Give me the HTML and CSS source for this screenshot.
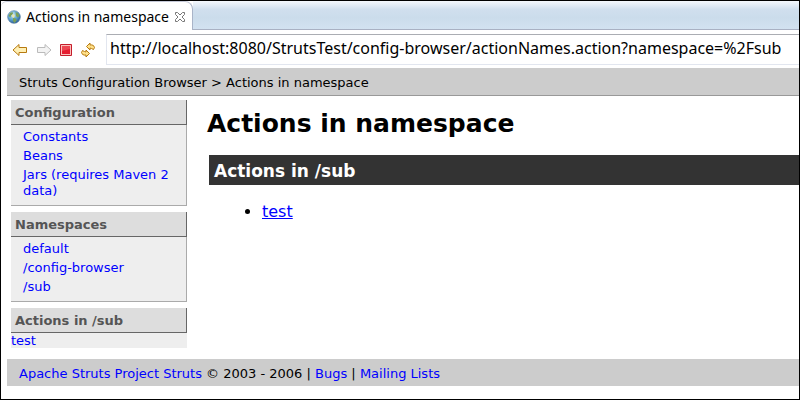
FILE: index.html
```
<!DOCTYPE html>
<html lang="en">
<head>
<meta charset="utf-8">
<title>Actions in namespace</title>
<link rel="stylesheet" href="styles.css">
</head>
<body>
<div class="window">
  <div class="tabs">
    <div class="tab">
      <svg class="globe" width="14" height="14" viewBox="0 0 14 14" aria-hidden="true">
        <defs><radialGradient id="sea" cx=".38" cy=".3" r=".8"><stop offset="0" stop-color="#cbe8f7"/><stop offset=".5" stop-color="#5fa5d2"/><stop offset="1" stop-color="#1c4a88"/></radialGradient></defs>
        <circle cx="7" cy="7" r="6.3" fill="url(#sea)" stroke="#5580a5" stroke-width=".7"/>
        <path d="M1.500 6 3 3l2.500-1 .5 2-2 1.500-.5 2zM8.500 2l2.500 1 1.500 3-2 1.500L9 6zM6 8l3 .5.5 2L7.500 13 6 11z" fill="#7a9f57"/>
        <path d="M5 5l2-1 1 2-1.500 2L5 7z" fill="#e9e5b0"/>
      </svg>
      <span>Actions in namespace</span>
      <button class="close" aria-label="Close tab">
        <svg width="12" height="12" viewBox="0 0 12 12"><path d="M1.500 1.500h2L6 4l2.500-2.500h2v2L8 6l2.500 2.500v2h-2L6 8l-2.500 2.500h-2v-2L4 6 1.500 3.500z" fill="#fff" stroke="#777"/></svg>
      </button>
    </div>
    <div class="strip"></div>
  </div>
  <form class="toolbar">
    <button type="button" aria-label="Back"><svg width="16" height="14" viewBox="0 0 16 14"><path d="M1 7 7 1.500v3h7.500v5H7v3z" fill="#fff0b5" stroke="#b77a10" stroke-linejoin="round"/></svg></button>
    <button type="button" aria-label="Forward"><svg width="16" height="14" viewBox="0 0 16 14"><path d="M15 7 9 1.500v3H1.500v5H9v3z" fill="#f3f3f3" stroke="#bbb" stroke-linejoin="round"/></svg></button>
    <button type="button" aria-label="Stop"><svg width="12" height="12" viewBox="0 0 12 12"><path d="M.5.5h11v11H.5z" fill="#fbc1bd" stroke="#c51d2b"/><path d="M2 2h8v8H2z" fill="#e51d30"/><path d="M2 2h8v3L2 7z" fill="#ec4651"/></svg></button>
    <button type="button" aria-label="Refresh"><svg width="16" height="16" viewBox="0 0 16 16"><g fill="#ffe18a" stroke="#b77a10" stroke-linejoin="round"><path d="M6.500 4.500 10 1v2c2.500-.5 4 .5 4.500 2.500L13.500 7.500l-2-1-1.500-.5v2z"/><path d="M9.500 11.500 6 15v-2c-2.500.5-4-.5-4.500-2.500l1-2 2 1L6 10V8z"/></g></svg></button>
    <input class="address" type="text" aria-label="Address" value="http://localhost:8080/StrutsTest/config-browser/actionNames.action?namespace=%2Fsub">
  </form>
  <div class="page">
    <header class="crumbs">Struts Configuration Browser &gt; Actions in namespace</header>
    <div class="columns">
      <nav class="sidebar">
        <section>
          <h3>Configuration</h3>
          <ul class="links">
            <li><a href="#">Constants</a></li>
            <li><a href="#">Beans</a></li>
            <li><a href="#">Jars (requires Maven 2 data)</a></li>
          </ul>
        </section>
        <section>
          <h3>Namespaces</h3>
          <ul class="links">
            <li><a href="#">default</a></li>
            <li><a href="#">/config-browser</a></li>
            <li><a href="#">/sub</a></li>
          </ul>
        </section>
        <section>
          <h3>Actions in /sub</h3>
          <a class="plain" href="#">test</a>
        </section>
      </nav>
      <main>
        <h1>Actions in namespace</h1>
        <h2>Actions in /sub</h2>
        <ul><li><a href="#">test</a></li></ul>
      </main>
    </div>
    <footer><a href="#">Apache Struts Project Struts</a> © 2003 - 2006 | <a href="#">Bugs</a> | <a href="#">Mailing Lists</a></footer>
  </div>
</div>
</body>
</html>
```
FILE: styles.css
```
* { box-sizing: border-box; }
body {
  margin: 0;
  background: #fff;
  color: #000;
  font: 13px/16px "DejaVu Sans", sans-serif;
}
.window {
  min-height: 100vh;
  border: 1px solid #000;
}
a { color: #00f; text-decoration: none; }
button {
  display: flex;
  padding: 0;
  border: 0;
  background: none;
}
.tabs { display: flex; height: 29px; }
.tab {
  display: flex;
  align-items: center;
  gap: 5px;
  padding: 2px 6px 0;
  border-top: 1px solid #c5c9d8;
  border-right: 1px solid #a9b4c8;
  border-radius: 6px 8px 0 0;
  font: 14px/20px "Noto Sans", sans-serif;
  white-space: nowrap;
}
.strip {
  flex: 1;
  border-bottom: 1px solid #a9b1c3;
  background: linear-gradient(#f4f8fd, #d0dfee 30%, #cbdceb 60%, #d2e2f1);
}
.toolbar {
  display: flex;
  align-items: center;
  gap: 8px;
  height: 38px;
  padding: 4px 0 3px 11px;
}
.address {
  flex: 1;
  min-width: 0;
  height: 31px;
  margin-left: 2px;
  padding: 0 3px 3px;
  border: 1px solid #e2e6ef;
  border-top-color: #abadb3;
  border-right: 0;
  font: 16px/24px "Noto Sans", sans-serif;
  color: #000;
}
.page { padding-left: 6px; }
.crumbs {
  padding: 7px 12px 4px;
  border-bottom: 1px solid #999;
  background: #ccc;
}
.columns {
  display: flex;
  gap: 20px;
  padding: 4px 0 11px 4px;
}
.sidebar {
  display: flex;
  flex-direction: column;
  flex: none;
  gap: 6px;
  width: 176px;
}
.sidebar section { background: #eee; }
.sidebar h3 {
  margin: 0;
  padding: 5px 4px 3px;
  border: solid #666;
  border-width: 0 1px 1px 0;
  background: #ddd;
  color: #555;
  font-size: 13px;
  line-height: 16px;
}
.links {
  display: flex;
  flex-direction: column;
  gap: 3px;
  margin: 0;
  padding: 4px 12px 6px;
  border: solid #aaa;
  border-width: 0 1px 1px 0;
  list-style: none;
}
.links a, .plain { display: block; }
.plain { line-height: 15px; }
main { flex: 1; min-width: 0; }
h1 {
  margin: 8px 0 15px;
  font-size: 25px;
  line-height: 32px;
}
h2 {
  margin: 0 0 16px 2px;
  padding: 6px 5px 4px;
  background: #333;
  color: #fff;
  font-size: 17px;
  line-height: 20px;
}
main ul {
  margin: 0;
  padding-left: 55px;
  font-size: 16px;
  line-height: 22px;
}
main li a { text-decoration: underline; }
footer { padding: 7px 12px 4px; background: #ccc; }
```
